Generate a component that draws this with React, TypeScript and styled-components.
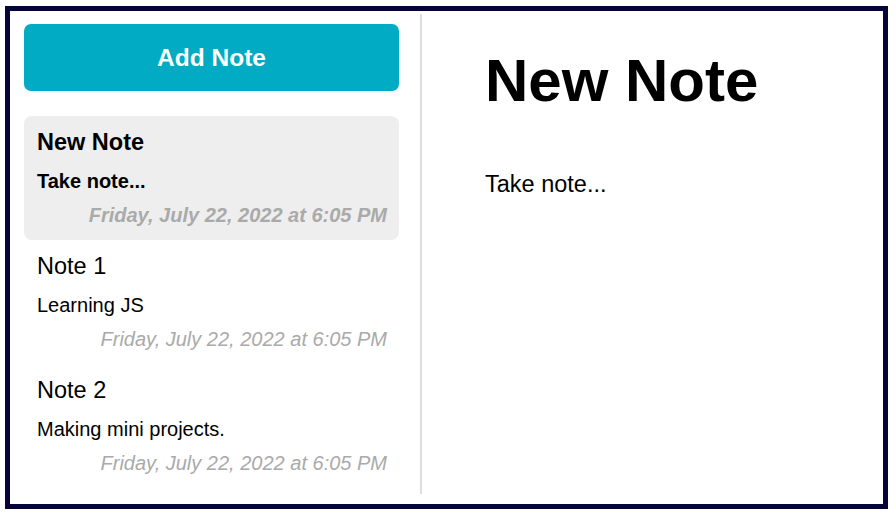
import React, { useState } from 'react';
import styled, { createGlobalStyle } from 'styled-components';

const GlobalStyle = createGlobalStyle`
  body {
    margin: 0;
    background: #ffffff;
    font-family: 'Liberation Sans', Arial, sans-serif;
  }
`;

const Frame = styled.div`
  display: flex;
  box-sizing: border-box;
  width: 883px;
  height: 503px;
  margin: 6px 0 0 5px;
  border: 5px solid #04043a;
  background: #ffffff;
`;

const Sidebar = styled.aside`
  box-sizing: border-box;
  flex: 0 0 412px;
  height: 480px;
  margin-top: 3px;
  padding: 10px 21px 0 14px;
  border-right: 2px solid #dddddd;
  display: flex;
  flex-direction: column;
`;

const AddButton = styled.button`
  height: 67px;
  border: none;
  border-radius: 7px;
  background: #00abc3;
  color: #ffffff;
  font-family: inherit;
  font-size: 24.5px;
  font-weight: 700;
  cursor: pointer;
`;

const NoteList = styled.div`
  display: flex;
  flex-direction: column;
  margin-top: 25px;
`;

const NoteItem = styled.div<{ $active: boolean }>`
  padding: 12px 12px 13px 13px;
  border-radius: 8px;
  background: ${({ $active }) => ($active ? '#eeeeee' : 'transparent')};
  font-weight: ${({ $active }) => ($active ? 700 : 400)};
  color: #000000;
  cursor: pointer;
`;

const NoteTitle = styled.div`
  font-size: 23.5px;
  line-height: 28px;
  margin-bottom: 13px;
`;

const NoteBody = styled.div`
  font-size: 20px;
  line-height: 24px;
  margin-bottom: 10px;
`;

const NoteDate = styled.div`
  font-size: 20px;
  line-height: 24px;
  font-style: italic;
  color: #aaaaaa;
  text-align: right;
`;

const Main = styled.main`
  flex: 1;
  padding: 35px 20px 0 63px;
`;

const Heading = styled.h1`
  margin: 0;
  font-size: 60px;
  line-height: 69px;
  font-weight: 700;
  color: #000000;
`;

const Body = styled.p`
  margin: 56px 0 0;
  font-size: 23.5px;
  line-height: 27px;
  color: #000000;
`;

type Note = { id: number; title: string; body: string; date: string };

const stamp = 'Friday, July 22, 2022 at 6:05 PM';

const initialNotes: Note[] = [
  { id: 3, title: 'New Note', body: 'Take note...', date: stamp },
  { id: 1, title: 'Note 1', body: 'Learning JS', date: stamp },
  { id: 2, title: 'Note 2', body: 'Making mini projects.', date: stamp },
];

export default function App() {
  const [notes, setNotes] = useState<Note[]>(initialNotes);
  const [activeId, setActiveId] = useState(3);
  const active = notes.find((n) => n.id === activeId) ?? notes[0];

  const addNote = () => {
    const id = Date.now();
    setNotes([{ id, title: 'New Note', body: 'Take note...', date: stamp }, ...notes]);
    setActiveId(id);
  };

  return (
    <>
      <GlobalStyle />
      <Frame>
        <Sidebar>
          <AddButton type='button' onClick={addNote}>
            Add Note
          </AddButton>
          <NoteList>
            {notes.slice(0, 3).map((note) => (
              <NoteItem key={note.id} $active={note.id === activeId} onClick={() => setActiveId(note.id)}>
                <NoteTitle>{note.title}</NoteTitle>
                <NoteBody>{note.body}</NoteBody>
                <NoteDate>{note.date}</NoteDate>
              </NoteItem>
            ))}
          </NoteList>
        </Sidebar>
        <Main>
          <Heading>{active.title}</Heading>
          <Body>{active.body}</Body>
        </Main>
      </Frame>
    </>
  );
}
